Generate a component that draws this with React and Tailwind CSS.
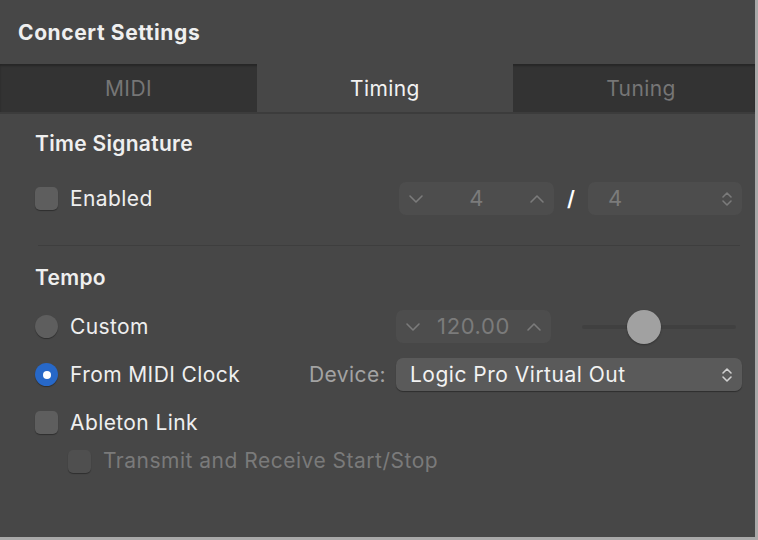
import React from 'react';

const font = { fontFamily: 'Inter, "Noto Sans", sans-serif' };

function Chevron({ dir = 'down', className = '' }) {
    const d = dir === 'down' ? 'M2 4l6 6 6-6' : 'M2 10l6-6 6 6';
    return (
        <svg width="16" height="14" viewBox="0 0 16 14" className={className}>
            <path d={d} fill="none" stroke="currentColor" strokeWidth="1.6" strokeLinecap="round" strokeLinejoin="round" />
        </svg>
    );
}

function UpDown({ className = '' }) {
    return (
        <svg width="12" height="18" viewBox="0 0 12 18" className={className}>
            <path d="M2 7l4-4 4 4M2 11l4 4 4-4" fill="none" stroke="currentColor" strokeWidth="1.6" strokeLinecap="round" strokeLinejoin="round" />
        </svg>
    );
}

function Checkbox({ dim }) {
    return (
        <div className={`h-[23px] w-[23px] shrink-0 rounded-[5px] shadow-[0_1px_1px_rgba(0,0,0,0.35)] ${dim ? 'bg-[#4f4f4f]' : 'bg-[#5e5e5e]'}`} />
    );
}

function Radio({ on }) {
    if (on) {
        return (
            <div className="flex h-[23px] w-[23px] shrink-0 items-center justify-center rounded-full bg-[#2768c8] shadow-[0_1px_1px_rgba(0,0,0,0.35)]">
                <div className="h-[8px] w-[8px] rounded-full bg-white" />
            </div>
        );
    }
    return <div className="h-[23px] w-[23px] shrink-0 rounded-full bg-[#5e5e5e] shadow-[0_1px_1px_rgba(0,0,0,0.35)]" />;
}

function Stepper({ value }) {
    return (
        <div className="flex h-[33px] w-[155px] items-center justify-between rounded-[7px] bg-[#4d4d4d] px-[9px] text-[#7b7b7b]">
            <Chevron dir="down" />
            <span className="text-[22px] tracking-[0.6px]">{value}</span>
            <Chevron dir="up" />
        </div>
    );
}

export default function App() {
    return (
        <div className="h-[540px] w-[758px] bg-[#a9a9a9]" style={font}>
            <div className="flex h-[537px] w-[755px] flex-col overflow-hidden bg-[#474747] text-[#efefef]">
                <div className="flex h-[64px] items-center pl-[18px] pt-[2px] text-[21px] font-bold tracking-[0.6px]">
                    Concert Settings
                </div>

                <div className="flex h-[48px] bg-[#333333] text-[21px] tracking-[0.4px] shadow-[inset_0_2px_2px_rgba(0,0,0,0.25)]">
                    <div className="flex w-[257px] shrink-0 items-center justify-center pt-[2px] text-[#767676]">MIDI</div>
                    <div className="flex w-[256px] shrink-0 items-center justify-center bg-[#474747] pt-[2px] text-[#f2f2f2]">Timing</div>
                    <div className="flex w-[256px] shrink-0 items-center justify-center pt-[2px] text-[#767676]">Tuning</div>
                </div>
                <div className="h-[2px] bg-[#3c3c3c]" />

                <div className="flex flex-col pl-[35px] pr-[13px]">
                    <div className="mt-[15px] text-[21px] font-semibold leading-[30px] tracking-[0.3px]">Time Signature</div>

                    <div className="mt-[23px] flex h-[33px] items-center">
                        <Checkbox />
                        <span className="ml-[12px] text-[21px] tracking-[0.4px]">Enabled</span>
                        <div className="ml-auto flex items-center">
                            <Stepper value="4" />
                            <span className="mx-[13px] text-[21px] font-semibold text-white">/</span>
                            <div className="flex h-[33px] w-[154px] items-center justify-between rounded-[7px] bg-[#4d4d4d] pl-[20px] pr-[9px] text-[#7b7b7b]">
                                <span className="text-[22px]">4</span>
                                <UpDown />
                            </div>
                        </div>
                    </div>

                    <div className="ml-[3px] mr-[2px] mt-[30px] h-[1px] bg-[#3e3e3e]" />

                    <div className="mt-[17px] text-[21px] font-semibold leading-[30px] tracking-[0.3px]">Tempo</div>

                    <div className="mt-[17px] flex h-[33px] items-center">
                        <Radio />
                        <span className="ml-[12px] text-[21px] tracking-[0.4px]">Custom</span>
                        <div className="ml-auto flex items-center">
                            <Stepper value="120.00" />
                            <div className="relative ml-[31px] mr-[6px] flex h-[36px] w-[154px] items-center">
                                <div className="h-[4px] w-full rounded-full bg-[#404040]" />
                                <div className="absolute left-[45px] top-[1px] h-[34px] w-[34px] rounded-full bg-[#a1a1a1] shadow-[0_1px_2px_rgba(0,0,0,0.3)]" />
                            </div>
                        </div>
                    </div>

                    <div className="mt-[15px] flex h-[33px] items-center">
                        <Radio on />
                        <span className="ml-[12px] text-[21px] tracking-[0.4px]">From MIDI Clock</span>
                        <span className="ml-auto mr-[10px] text-[21px] tracking-[0.4px] text-[#a3a3a3]">Device:</span>
                        <div className="flex h-[33px] w-[346px] items-center justify-between rounded-[7px] bg-[#5a5a5a] pl-[14px] pr-[9px] shadow-[0_1px_1px_rgba(0,0,0,0.35)]">
                            <span className="text-[21px] tracking-[0.5px] text-[#f2f2f2]">Logic Pro Virtual Out</span>
                            <UpDown className="text-[#d0d0d0]" />
                        </div>
                    </div>

                    <div className="mt-[15px] flex h-[33px] items-center">
                        <Checkbox />
                        <span className="ml-[12px] text-[21px] tracking-[0.4px]">Ableton Link</span>
                    </div>

                    <div className="ml-[33px] mt-[10px] flex h-[24px] items-center">
                        <Checkbox dim />
                        <span className="ml-[12px] text-[21px] tracking-[0.5px] text-[#7a7a7a]">Transmit and Receive Start/Stop</span>
                    </div>
                </div>
            </div>
        </div>
    );
}
